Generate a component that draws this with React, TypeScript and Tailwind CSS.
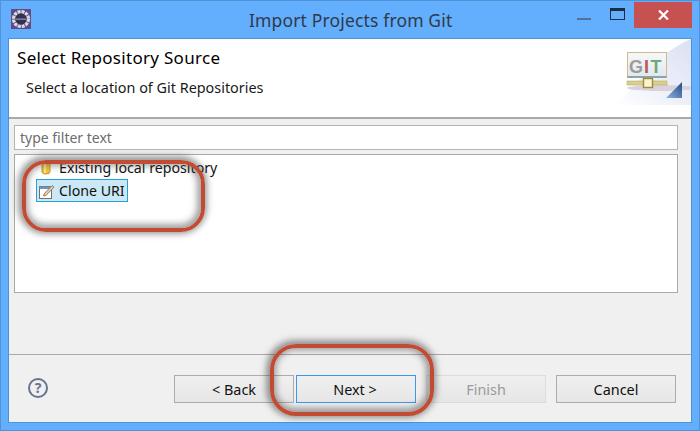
const font = "[font-family:'Noto_Sans',sans-serif]";

const EclipseIcon = () => (
  <svg width="20" height="20" viewBox="0 0 20 20" className="block">
    <rect width="20" height="20" fill="#5d4b8c" />
    <circle cx="10" cy="10" r="7.4" fill="none" stroke="#dcdcdc" strokeWidth="3.4" strokeDasharray="3 0.9" />
    <circle cx="10" cy="10" r="5.6" fill="#34304f" />
    <rect x="4.6" y="9.4" width="10.8" height="1.6" fill="#7f7a9c" />
  </svg>
);

const GitBanner = () => (
  <svg width="75" height="66" viewBox="0 0 75 66" className="block">
    <defs>
      <linearGradient id="bannerBg" x1="0" y1="1" x2="1" y2="0">
        <stop offset="0" stopColor="#ffffff" />
        <stop offset="0.45" stopColor="#eef0fa" />
        <stop offset="1" stopColor="#dbe1f3" />
      </linearGradient>
      <linearGradient id="gitBox" x1="0" y1="0" x2="0" y2="1">
        <stop offset="0" stopColor="#f7f8f8" />
        <stop offset="1" stopColor="#dfe8ee" />
      </linearGradient>
      <linearGradient id="corner" x1="0" y1="1" x2="1" y2="0">
        <stop offset="0" stopColor="#8fb2de" />
        <stop offset="1" stopColor="#234a88" />
      </linearGradient>
    </defs>
    <path d="M0 66 C20 50 30 20 75 0 L75 66 Z" fill="url(#bannerBg)" />
    <ellipse cx="45" cy="49" rx="34" ry="3" fill="#d9d2dc" />
    <rect x="11.5" y="13.5" width="39" height="25" fill="url(#gitBox)" stroke="#cdb994" />
    <path d="M11.5 38h39" stroke="#8aa5a5" strokeWidth="2" />
    <text x="13" y="34" fontFamily="'Liberation Sans',sans-serif" fontWeight="700" fontSize="18" fill="#9b9b9b">G</text>
    <text x="28" y="34" fontFamily="'Liberation Sans',sans-serif" fontWeight="700" fontSize="18" fill="#b85a5e">I</text>
    <text x="34.5" y="34" fontFamily="'Liberation Sans',sans-serif" fontWeight="700" fontSize="18" fill="#6fa878">T</text>
    <rect x="11" y="42" width="40" height="4" fill="#d9cf8e" stroke="#b8ab62" strokeWidth="0.6" />
    <rect x="27.5" y="39.5" width="9" height="9" fill="#fbf3cf" stroke="#9c8a3e" strokeWidth="1.4" />
    <path d="M66 59V43L50 59Z" fill="url(#corner)" />
  </svg>
);

const CloneIcon = () => (
  <svg width="16" height="16" viewBox="0 0 16 16" className="block">
    <rect x="0.5" y="3.5" width="12" height="12" fill="#fff" stroke="#77705c" />
    <rect x="0.5" y="3.5" width="12" height="2.5" fill="#6f95c4" />
    <path d="M5 11 L13 2.5 L15 4 L7 12.5 L4.5 13 Z" fill="#e8c9a8" stroke="#8a6a50" strokeWidth="0.8" />
  </svg>
);

const RepoIcon = () => (
  <svg width="10" height="14" viewBox="0 0 10 14" className="block">
    <path d="M1 1.5 H9 V11 Q9 13 5 13 Q1 13 1 11 Z" fill="#efc33f" stroke="#c99a24" />
    <rect x="3" y="2" width="2" height="10" fill="#fbe88f" />
  </svg>
);

const DialogButton = ({ label, variant = 'normal' }: { label: string; variant?: string }) => {
  const styles =
    variant === 'default'
      ? 'border-[#3c98ee] text-[#111] pr-[2px]'
      : variant === 'disabled'
        ? 'border-[#dcdcdc] text-[#9a9a9a] bg-[#efefef]'
        : 'border-[#acacac] text-[#111]';
  return (
    <button
      className={`w-[120px] h-[28px] border bg-gradient-to-b from-[#f0f0f0] to-[#e6e6e6] text-[14.4px] leading-[28px] ${styles}`}
    >
      {label}
    </button>
  );
};

export default function App() {
  return (
    <div className={`relative w-[700px] h-[431px] overflow-hidden bg-[#63aefd] border border-[#4f93d6] flex flex-col ${font}`}>
      <div className="h-[37px] flex items-center relative shrink-0">
        <div className="ml-[10px] mb-[1px]">
          <EclipseIcon />
        </div>
        <div className="absolute left-[248px] top-[7px] text-[17.5px] leading-[24px] tracking-[0.15px] text-[#2f3a4a]">
          Import Projects from Git
        </div>
        <div className="ml-auto flex items-start self-start">
          <div className="w-[14px] h-[2px] bg-[#4f7299] mt-[17px] mr-[19px]" />
          <div className="w-[15px] h-[12px] border border-[#1d2d40] border-t-[3px] mt-[7px] mr-[9px]" />
          <div className="w-[58px] h-[26px] bg-[#c75050] flex items-center justify-center mr-[7px] mt-px">
            <svg width="11" height="10" viewBox="0 0 11 10">
              <path d="M1 0.5 L10 9.5 M10 0.5 L1 9.5" stroke="#fff" strokeWidth="2.2" />
            </svg>
          </div>
        </div>
      </div>

      <div className="mx-[7px] h-[385px] border border-[#4f93d6] flex flex-col bg-[#f0f0f0]">
        <div className="h-[80px] bg-white border-b-2 border-[#a9a9a9] flex shrink-0">
          <div className="pl-[8px] pt-[7px] text-[#000]">
            <div className="text-[17px] leading-[23px] tracking-[0.3px]">Select Repository Source</div>
            <div className="pl-[9px] pt-[9px] text-[14.4px] leading-[20px] text-[#1a1a1a]">
              Select a location of Git Repositories
            </div>
          </div>
          <div className="ml-auto">
            <GitBanner />
          </div>
        </div>

        <div className="flex-1 flex flex-col pl-[5px] pt-[6px] pr-[13px]">
          <div className="h-[25px] bg-white border border-[#b5b5b5] px-[5px] text-[14px] leading-[23px] text-[#6d6d6d]">
            type filter text
          </div>
          <div className="mt-[4px] h-[139px] bg-white border border-[#a9a9a9] pl-[21px] pt-[1px] text-[14.2px] text-[#111]">
            <div className="h-[23px] flex items-center pl-[5px] gap-[8px]">
              <RepoIcon />
              <span>Existing local repository</span>
            </div>
            <div className="h-[23px] w-[92px] flex items-center pl-[2px] gap-[4px] bg-[#cbe8f6] border border-[#26a0da]">
              <CloneIcon />
              <span>Clone URI</span>
            </div>
          </div>
        </div>

        <div className="h-[68px] border-t border-[#a9a9a9] flex items-start shrink-0 pt-[20px] pr-[15px]">
          <div className="ml-[19px] mt-[3px] w-[20px] h-[20px] rounded-full border-2 border-[#66758f] text-[#66758f] text-[14px] leading-[16px] font-bold text-center">
            ?
          </div>
          <div className="ml-auto flex">
            <DialogButton label="< Back" />
            <div className="ml-[2px]">
              <DialogButton label="Next >" variant="default" />
            </div>
            <div className="ml-[10px]">
              <DialogButton label="Finish" variant="disabled" />
            </div>
            <div className="ml-[10px]">
              <DialogButton label="Cancel" />
            </div>
          </div>
        </div>
      </div>

      <div className="absolute left-[21px] top-[159px] w-[183px] h-[72px] rounded-[24px] border-[4px] border-[#c24c33] shadow-[-1px_-1px_6px_3px_rgba(70,70,70,0.55),inset_-1px_-1px_6px_3px_rgba(70,70,70,0.5)]" />
      <div className="absolute left-[269px] top-[343px] w-[164px] h-[72px] rounded-[26px] border-[4px] border-[#c24c33] shadow-[-1px_-1px_6px_3px_rgba(70,70,70,0.55),inset_-1px_-1px_6px_3px_rgba(70,70,70,0.5)]" />
    </div>
  );
}
